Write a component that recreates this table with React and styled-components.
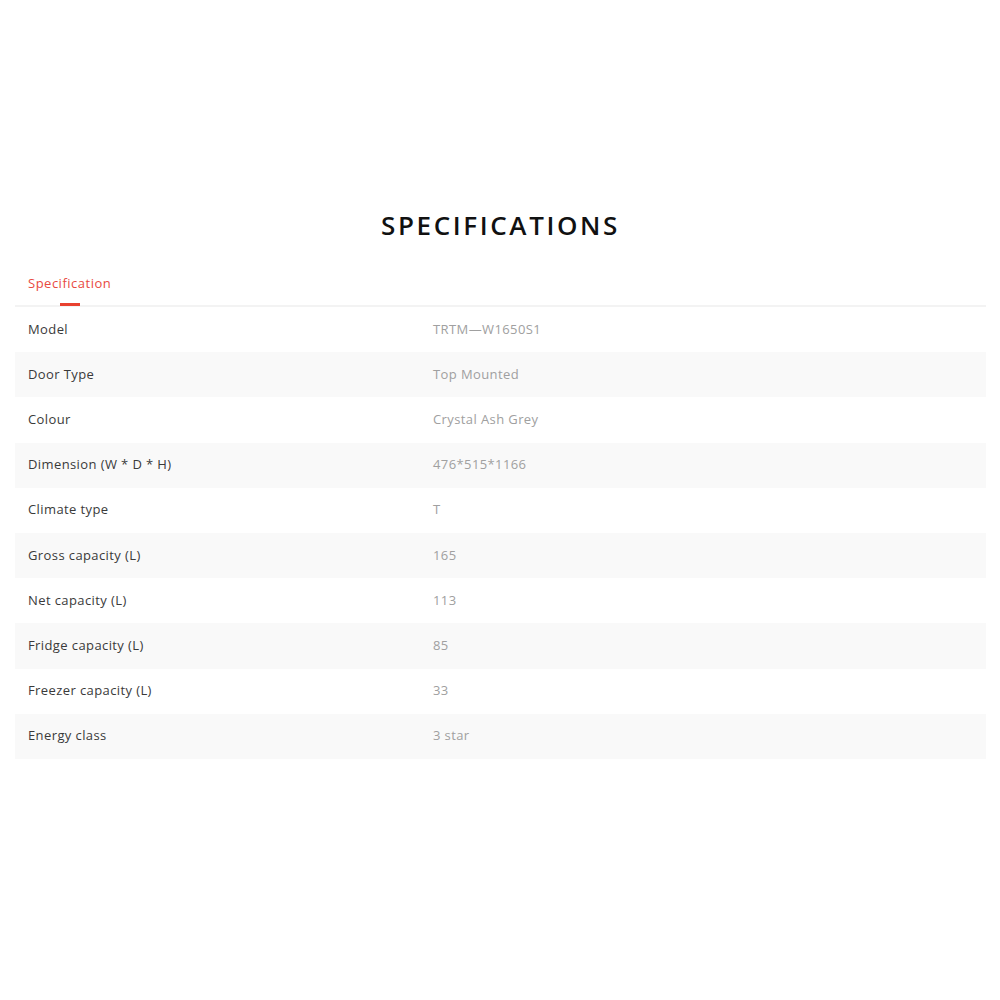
import styled, { createGlobalStyle } from "styled-components";

const GlobalStyle = createGlobalStyle`
  body {
    margin: 0;
    background: #ffffff;
    font-family: "Open Sans", "Liberation Sans", sans-serif;
  }
`;

const Page = styled.div`
  width: 1000px;
  height: 1000px;
  padding: 207px 14px 0 15px;
  box-sizing: border-box;
`;

const Title = styled.h2`
  margin: 0 0 31px 0;
  text-align: center;
  font-family: "Open Sans", "Liberation Sans", sans-serif;
  font-weight: 600;
  font-size: 26px;
  line-height: 36px;
  letter-spacing: 2.6px;
  color: #111;
`;

const Tabs = styled.div`
  display: flex;
  border-bottom: 2px solid #f3f3f3;
`;

const Tab = styled.div`
  position: relative;
  padding: 0 13px 13px 13px;
  font-size: 13px;
  line-height: 18px;
  letter-spacing: 0.5px;
  color: ${(props) => (props.active ? "#e84a3f" : "#666")};

  &::after {
    content: "";
    display: ${(props) => (props.active ? "block" : "none")};
    position: absolute;
    left: 50%;
    bottom: -1px;
    width: 20px;
    height: 3px;
    margin-left: -10px;
    background: #e8412f;
  }
`;

const Table = styled.div`
  display: flex;
  flex-direction: column;
`;

const Row = styled.div`
  display: grid;
  grid-template-columns: 418px 1fr;
  height: 45.2px;
  align-items: center;
  background: ${(props) => (props.shaded ? "#f9f9f9" : "#ffffff")};
`;

const Label = styled.div`
  padding-left: 13px;
  margin-top: -2px;
  font-size: 13px;
  letter-spacing: 0.4px;
  color: #3a3a3a;
`;

const Value = styled.div`
  margin-top: -2px;
  font-size: 13px;
  letter-spacing: 0.4px;
  color: #a0a0a0;
`;

const specs = [
  ["Model", "TRTM\u2014W1650S1"],
  ["Door Type", "Top Mounted"],
  ["Colour", "Crystal Ash Grey"],
  ["Dimension (W * D * H)", "476*515*1166"],
  ["Climate type", "T"],
  ["Gross capacity (L)", "165"],
  ["Net capacity (L)", "113"],
  ["Fridge capacity (L)", "85"],
  ["Freezer capacity (L)", "33"],
  ["Energy class", "3 star"],
];

export default function App() {
  return (
    <>
      <GlobalStyle />
      <Page>
        <Title>SPECIFICATIONS</Title>
        <Tabs>
          <Tab active>Specification</Tab>
        </Tabs>
        <Table>
          {specs.map(([label, value], i) => (
            <Row key={label} shaded={i % 2 === 1}>
              <Label>{label}</Label>
              <Value>{value}</Value>
            </Row>
          ))}
        </Table>
      </Page>
    </>
  );
}
